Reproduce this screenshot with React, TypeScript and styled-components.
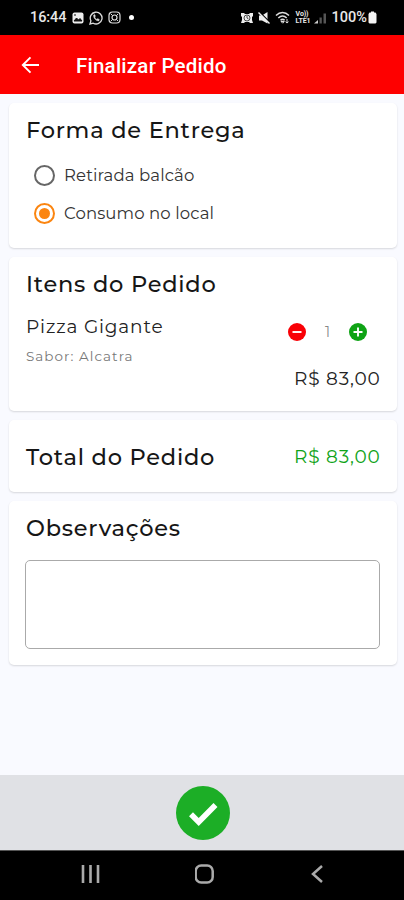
import React from 'react';
import styled, { createGlobalStyle } from 'styled-components';

const GlobalStyle = createGlobalStyle`
  * { box-sizing: border-box; }
  body { margin: 0; background: #000; }
  button { border: 0; padding: 0; background: none; display: flex; }
`;

const Screen = styled.div`
  width: 404px;
  height: 900px;
  display: flex;
  flex-direction: column;
  background: #f9faff;
  overflow: hidden;
  font-family: Montserrat, Inter, "Liberation Sans", sans-serif;
  color: #161616;
`;

const StatusBar = styled.div`
  height: 35px;
  flex: none;
  display: flex;
  justify-content: space-between;
  align-items: center;
  padding: 0 27px 0 30px;
  background: #000;
  color: #e8e8e8;
  font: 500 14px/16px Roboto, sans-serif;
`;

const StatusGroup = styled.div<{ $gap: number }>`
  display: flex;
  align-items: center;
  gap: ${(p) => p.$gap}px;
  white-space: nowrap;
`;

const Clock = styled.span`
  width: 37px;
  font-size: 14.5px;
  letter-spacing: -0.1px;
`;

const Dot = styled.span`
  width: 5px;
  height: 5px;
  margin-left: 3px;
  border-radius: 50%;
  background: #fff;
`;

const Network = styled.span`
  width: 16px;
  display: flex;
  flex-direction: column;
  font: 700 7px/7px Roboto, sans-serif;
  letter-spacing: -0.1px;
`;

const Signal = styled.svg`
  margin-left: -4px;
`;

const Battery = styled.span`
  display: flex;
  align-items: center;
  gap: 1px;
  font-size: 14.5px;
`;

const Header = styled.header`
  height: 59px;
  flex: none;
  display: flex;
  align-items: center;
  gap: 36px;
  padding: 1px 21px 0;
  background: #fe0000;
  color: #fff;
`;

const HeaderTitle = styled.h1`
  margin: 0;
  padding-top: 1px;
  font: 500 20.5px/24px Roboto, sans-serif;
  letter-spacing: 0.23px;
  white-space: nowrap;
`;

const Content = styled.main`
  flex: 1;
  display: flex;
  flex-direction: column;
  gap: 9px;
  padding: 9px 7px 0 9px;
`;

const Card = styled.section<{ $height: number; $center?: boolean }>`
  height: ${(p) => p.$height}px;
  flex: none;
  display: flex;
  flex-direction: ${(p) => (p.$center ? 'row' : 'column')};
  align-items: ${(p) => (p.$center ? 'center' : 'stretch')};
  justify-content: ${(p) => (p.$center ? 'space-between' : 'flex-start')};
  padding: ${(p) => (p.$center ? 2 : 12)}px 17px 0;
  border-radius: 5px;
  background: #fff;
  box-shadow: 0 1px 2px rgba(0, 0, 0, 0.14);
`;

const CardTitle = styled.h2`
  margin: 0;
  font-size: 22.5px;
  font-weight: 500;
  line-height: 30px;
  letter-spacing: 0.77px;
  white-space: nowrap;
`;

const Options = styled.div`
  display: flex;
  flex-direction: column;
  gap: 10px;
  margin-top: 16px;
  padding-left: 8px;
`;

const Option = styled.label`
  height: 28px;
  display: flex;
  align-items: center;
  gap: 9px;
  font-size: 16.5px;
  color: #333;
  letter-spacing: 0.12px;
  white-space: nowrap;
`;

const Radio = styled.span<{ $on?: boolean }>`
  width: 21px;
  height: 21px;
  flex: none;
  display: flex;
  align-items: center;
  justify-content: center;
  border-radius: 50%;
  border: 2px solid ${(p) => (p.$on ? '#fb8510' : '#666')};

  &::after {
    content: '';
    width: 11px;
    height: 11px;
    border-radius: 50%;
    background: ${(p) => (p.$on ? '#fb8510' : 'transparent')};
  }
`;

const Item = styled.div`
  display: flex;
  justify-content: space-between;
  margin-top: 15px;
`;

const ItemName = styled.div`
  font-size: 18.5px;
  line-height: 26px;
  letter-spacing: 0.83px;
  color: #222;
  white-space: nowrap;
`;

const ItemDetail = styled.div`
  margin-top: 6px;
  font-size: 13.5px;
  line-height: 20px;
  letter-spacing: 1.05px;
  color: #777;
  white-space: nowrap;
`;

const ItemSide = styled.div`
  display: flex;
  flex-direction: column;
  align-items: flex-end;
`;

const Stepper = styled.div`
  display: flex;
  align-items: center;
  gap: 17px;
  height: 20px;
  margin: 8px 13px 0 0;
`;

const Quantity = styled.span`
  width: 9px;
  text-align: center;
  font-size: 14px;
  color: #888;
`;

const StepButton = styled.button<{ $color: string }>`
  width: 18px;
  height: 18px;
  border-radius: 50%;
  background: ${(p) => p.$color};
`;

const Price = styled.div<{ $color: string }>`
  font-size: 18.5px;
  line-height: 24px;
  letter-spacing: 0.8px;
  margin-right: -0.5px;
  color: ${(p) => p.$color};
  white-space: nowrap;
`;

const PriceSlot = styled.div`
  margin-top: 25px;
`;

const Notes = styled.textarea`
  width: 355px;
  height: 89px;
  margin: 17px 0 0 -1px;
  border: 1.5px solid #aaa;
  border-radius: 5px;
  background: #fff;
  resize: none;
  outline: none;
`;

const ActionBar = styled.footer`
  height: 75px;
  flex: none;
  display: flex;
  align-items: center;
  justify-content: center;
  background: #e0e1e5;
`;

const Confirm = styled.button`
  width: 54px;
  height: 54px;
  margin: 0 0 0 1px;
  border-radius: 50%;
  background: #1cae26;
`;

const NavBar = styled.nav`
  height: 50px;
  flex: none;
  display: flex;
  justify-content: space-between;
  align-items: center;
  padding: 0 80px 3px 81px;
  border-top: 1px solid #555;
  background: #000;
`;

const StepIcon = ({ plus }: { plus?: boolean }) => (
  <svg width="18" height="18" viewBox="0 0 18 18" stroke="#fff" strokeWidth="1.9">
    <path d={plus ? 'M4.5 9h9M9 4.5v9' : 'M4.5 9h9'} />
  </svg>
);

export default function App() {
  return (
    <>
      <GlobalStyle />
      <Screen>
        <StatusBar>
          <StatusGroup $gap={5}>
            <Clock>16:44</Clock>
            <svg width="12" height="12" viewBox="0 0 12 12">
              <rect x=".5" y=".5" width="11" height="11" rx="2" fill="#eee" />
              <path d="M2 3h2M2 9l2.5-3 2 2L8 6.500l2 2.500z" fill="#111" stroke="#111" />
            </svg>
            <svg width="14" height="14" viewBox="0 0 14 14" fill="none" stroke="#ddd">
              <path d="M1 13l.9-3.200A5.900 5.900 0 1 1 4.200 12.200z" strokeWidth="1.300" />
              <path d="M4.600 4c-.5 3 2.400 6 5.300 5.900l.4-1.500-1.700-.8-.8.8C6.700 7.800 6 7 5.700 6l.8-.8-.7-1.600z" fill="#ddd" strokeWidth=".4" />
            </svg>
            <svg width="13" height="13" viewBox="0 0 13 13" fill="none" stroke="#ddd">
              <rect x="1" y="1" width="11" height="11" rx="3.500" strokeWidth="1.200" />
              <circle cx="6.500" cy="6.500" r="2.500" strokeWidth="1.200" />
              <path d="M3 3l1.500 1.500M10 3L8.500 4.500M3 10l1.500-1.500M10 10L8.500 8.500" />
            </svg>
            <Dot />
          </StatusGroup>
          <StatusGroup $gap={5}>
            <svg width="12" height="12" viewBox="0 0 12 12">
              <path d="M0 1l3 0 1 1h4l1-1h3v3l-1 1v3l1 3H9l-1-1H4l-1 1H0l1-3V5L0 4z" fill="#eee" />
              <circle cx="6" cy="6" r="3" fill="none" stroke="#222" strokeWidth=".8" />
              <path d="M6 4v2l1.500 1" fill="none" stroke="#222" strokeWidth=".8" />
            </svg>
            <svg width="12" height="12" viewBox="0 0 12 12">
              <path d="M1 3.500h3L9.500 0v11.500L4 8.500H1z" fill="#eee" />
              <path d="M1 -.5l11 11" stroke="#000" strokeWidth="1.400" />
              <path d="M.5 .5l11 11" stroke="#eee" strokeWidth="1.400" />
            </svg>
            <svg width="16" height="13" viewBox="0 0 16 13" fill="none" stroke="#ddd" strokeWidth="1.500">
              <path d="M1 4.500c4-4 9-4 13 0M3.300 7c2.800-2.700 5.700-2.700 8.400 0M5.500 9.300c1.500-1.300 2.700-1.300 4.200 0" />
              <path d="M6 10.500l1.700 1.700 1.600-1.700zM12 8v4m-1.500-1.300L12 12l1.500-1.300" strokeWidth="1" />
            </svg>
            <Network>
              <span>Vo))</span>
              <span>LTE1</span>
            </Network>
            <Signal width="14" height="12" viewBox="0 0 14 12">
              <path d="M1 11.500h4V8z" fill="#ccc" />
              <path d="M6.500 5.500h2.300v6H6.500zM10.500 1.500H13v10h-2.500z" fill="#555" />
            </Signal>
            <Battery>
              100%
              <svg width="9" height="13" viewBox="0 0 9 13">
                <path d="M3 .5h3v1h1.500l1 1.500v8.500l-1 1h-6l-1-1V3l1-1.500H3z" fill="#f4f4f4" />
              </svg>
            </Battery>
          </StatusGroup>
        </StatusBar>
        <Header>
          <button aria-label="Voltar">
            <svg width="19" height="18" viewBox="0 0 19 18" fill="none" stroke="#fff" strokeWidth="1.900">
              <path d="M18 9H2M9.500 1.300L1.800 9l7.700 7.700" />
            </svg>
          </button>
          <HeaderTitle>Finalizar Pedido</HeaderTitle>
        </Header>
        <Content>
          <Card $height={145}>
            <CardTitle>Forma de Entrega</CardTitle>
            <Options>
              <Option><Radio />Retirada balcão</Option>
              <Option><Radio $on />Consumo no local</Option>
            </Options>
          </Card>
          <Card $height={154}>
            <CardTitle>Itens do Pedido</CardTitle>
            <Item>
              <div>
                <ItemName>Pizza Gigante</ItemName>
                <ItemDetail>Sabor: Alcatra</ItemDetail>
              </div>
              <ItemSide>
                <Stepper>
                  <StepButton $color="#f90006" aria-label="Remover"><StepIcon /></StepButton>
                  <Quantity>1</Quantity>
                  <StepButton $color="#0fa315" aria-label="Adicionar"><StepIcon plus /></StepButton>
                </Stepper>
                <PriceSlot><Price $color="#222">R$ 83,00</Price></PriceSlot>
              </ItemSide>
            </Item>
          </Card>
          <Card $height={72} $center>
            <CardTitle>Total do Pedido</CardTitle>
            <Price $color="#10a318">R$ 83,00</Price>
          </Card>
          <Card $height={164}>
            <CardTitle>Observações</CardTitle>
            <Notes aria-label="Observações" />
          </Card>
        </Content>
        <ActionBar>
          <Confirm aria-label="Confirmar">
            <svg width="54" height="54" viewBox="0 0 54 54" fill="none" stroke="#fff" strokeWidth="5.600">
              <path d="M15 28.300l7.700 7.700L39.500 19" />
            </svg>
          </Confirm>
        </ActionBar>
        <NavBar>
          <svg width="19" height="18" viewBox="0 0 19 18" stroke="#aaa" strokeWidth="2.600">
            <path d="M2 0v18M9.500 0v18M17 0v18" />
          </svg>
          <svg width="20" height="20" viewBox="0 0 20 20" fill="none" stroke="#aaa" strokeWidth="2.500">
            <rect x="0.700" y="1.500" width="17" height="17" rx="5.500" />
          </svg>
          <svg width="14" height="18" viewBox="0 0 14 18" fill="none" stroke="#aaa" strokeWidth="2.500">
            <path d="M12 1L3 9l9 8" />
          </svg>
        </NavBar>
      </Screen>
    </>
  );
}
